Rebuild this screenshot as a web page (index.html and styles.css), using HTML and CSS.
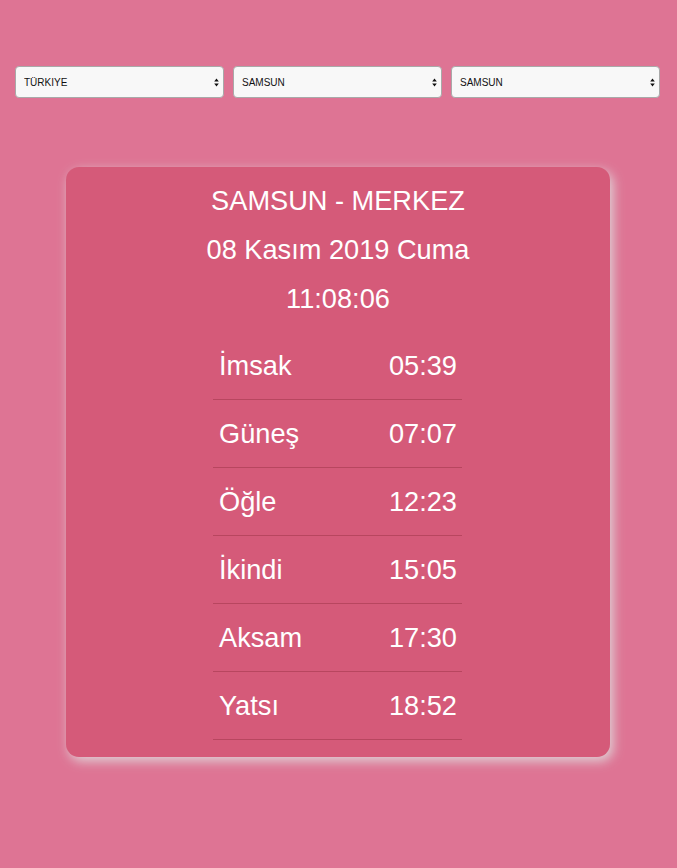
FILE: index.html
```html
<!DOCTYPE html>
<html lang="tr">
<head>
<meta charset="utf-8">
<link rel="stylesheet" href="styles.css">
</head>
<body>
<div class="selects">
  <div class="sel"><select><option>TÜRKİYE</option></select><span class="arrow"><svg width="5" height="9" viewBox="0 0 5 9"><path d="M2.5 0.5L4.8 3.6H0.2Z M2.5 8.5L4.8 5.4H0.2Z" fill="#111"/></svg></span></div>
  <div class="sel"><select><option>SAMSUN</option></select><span class="arrow"><svg width="5" height="9" viewBox="0 0 5 9"><path d="M2.5 0.5L4.8 3.6H0.2Z M2.5 8.5L4.8 5.4H0.2Z" fill="#111"/></svg></span></div>
  <div class="sel"><select><option>SAMSUN</option></select><span class="arrow"><svg width="5" height="9" viewBox="0 0 5 9"><path d="M2.5 0.5L4.8 3.6H0.2Z M2.5 8.5L4.8 5.4H0.2Z" fill="#111"/></svg></span></div>
</div>
<div class="card">
  <div class="line">SAMSUN - MERKEZ</div>
  <div class="line">08 Kasım 2019 Cuma</div>
  <div class="line">11:08:06</div>
  <div class="table">
    <div class="row"><span>İmsak</span><span>05:39</span></div>
    <div class="row"><span>Güneş</span><span>07:07</span></div>
    <div class="row"><span>Öğle</span><span>12:23</span></div>
    <div class="row"><span>İkindi</span><span>15:05</span></div>
    <div class="row"><span>Aksam</span><span>17:30</span></div>
    <div class="row"><span>Yatsı</span><span>18:52</span></div>
  </div>
</div>
</body>
</html>
```
FILE: styles.css
```css
html, body {
  margin: 0;
  padding: 0;
}
body {
  background: #de7494;
  font-family: "Liberation Sans", Arial, sans-serif;
  min-height: 868px;
}
.selects {
  display: flex;
  gap: 9px;
  padding: 66px 17px 0 15px;
}
.sel {
  flex: 1;
  position: relative;
}
.sel select {
  -webkit-appearance: none;
  appearance: none;
  width: 100%;
  height: 32px;
  box-sizing: border-box;
  background: #f8f8f8;
  border: 1px solid #a9a9a9;
  border-radius: 4px;
  font-family: "Liberation Sans", Arial, sans-serif;
  font-size: 10px;
  color: #111;
  padding: 0 0 0 8px;
  margin: 0;
  outline: none;
}
.arrow {
  position: absolute;
  right: 5px;
  top: 12px;
  width: 5px;
  height: 9px;
  display: block;
  pointer-events: none;
}
.arrow svg { display: block; }
.card {
  width: 544px;
  box-sizing: border-box;
  margin: 69px 0 0 66px;
  background: #d55a79;
  border-radius: 13px;
  box-shadow: 3px 4px 12px rgba(222, 216, 218, 0.95);
  padding: 9px 0 17px;
  color: #fff;
}
.line {
  text-align: center;
  font-size: 27.2px;
  line-height: 49px;
}
.table {
  width: 249px;
  margin: 9px 0 0 147px;
}
.row {
  display: flex;
  justify-content: space-between;
  align-items: center;
  height: 68px;
  box-sizing: border-box;
  padding: 0 5px 0 6px;
  border-bottom: 1px solid #b8465f;
  font-size: 27.2px;
}
```
